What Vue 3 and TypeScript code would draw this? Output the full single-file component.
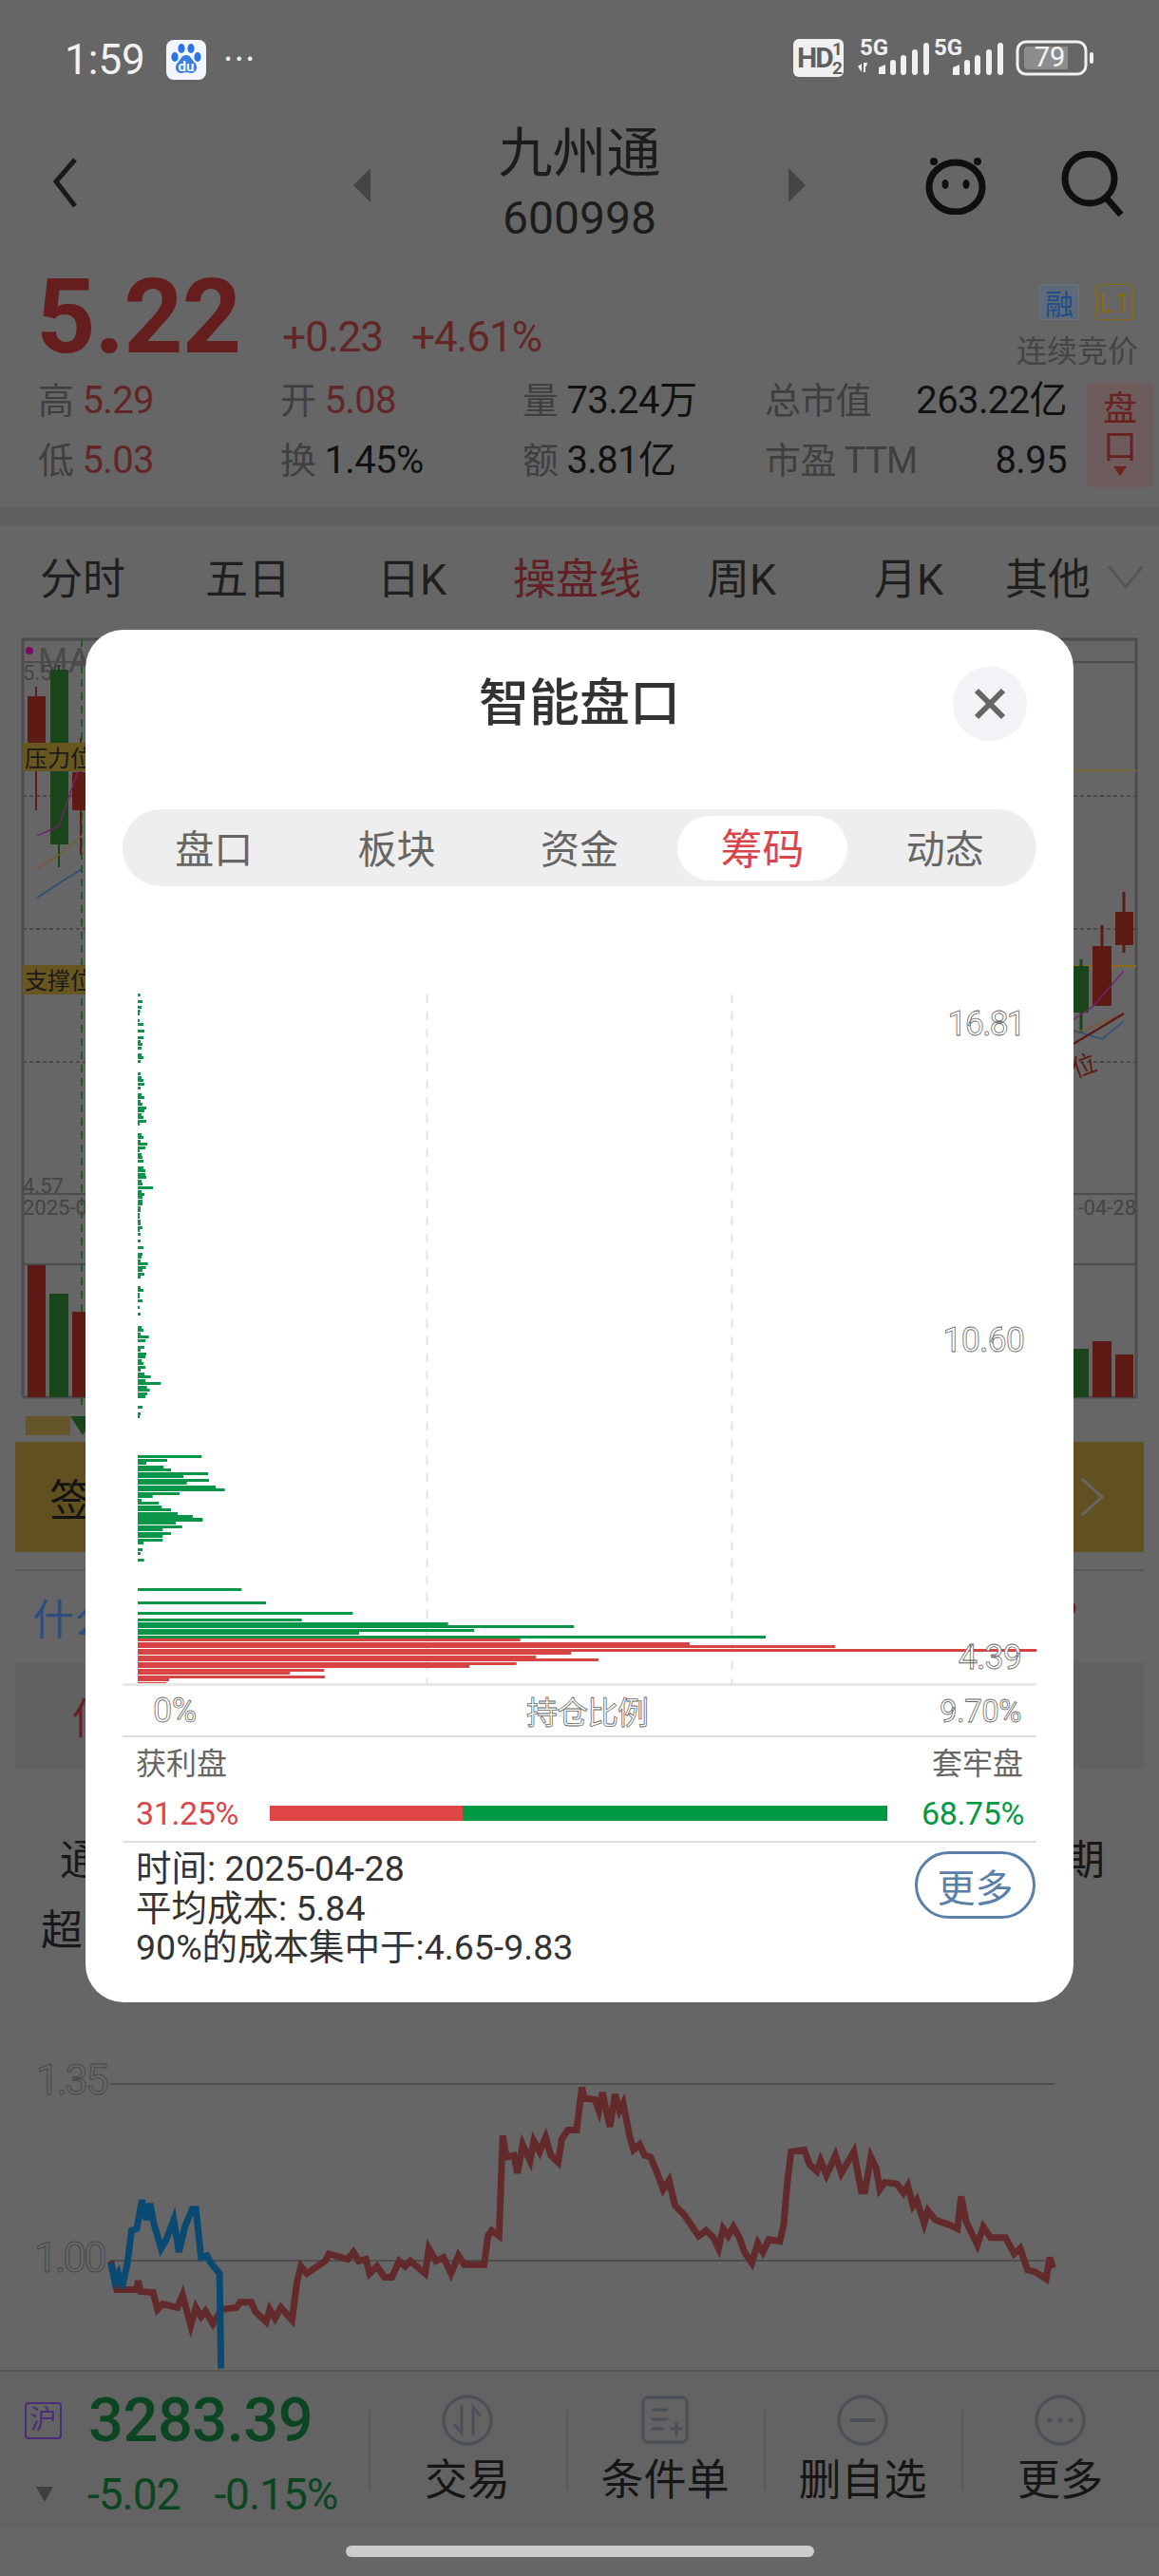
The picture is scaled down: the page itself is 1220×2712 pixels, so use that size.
<script setup lang="ts">
type P = [number, number]

const up = (list: P[]) => list.map(([y, x]) => ({ y: 1030 + y / 3, end: 100 + x / 3 }))
const mid = (list: P[]) => list.map(([y, x]) => ({ y: 1320 + y / 3, end: 100 + x / 3 }))
const low = (list: P[]) => list.map(([y, x]) => ({ y: 1590 + y / 3, end: 120 + x / 3 }))
const bot = (list: P[]) => list.map(([y, x]) => ({ y: 1640 + y / 3, end: 100 + x / 3 }))

const greenBars = [
  ...up([[52,143],[72,150],[92,147],[102,143],[113,141],[134,141],[145,153],[166,156],[187,153],[198,144],[208,150],[219,147],[240,147],[250,153],[261,144],[302,144],[313,147],[323,153],[334,156],[345,144],[366,147],[376,156],[387,144],[398,150],[408,162],[419,156],[429,147],[440,153],[450,162],[461,141],[492,147],[503,153],[513,144],[524,165],[534,159],[545,141],[555,147],[566,150],[577,153],[597,153],[608,159],[619,159],[629,162],[640,147],[650,150],[661,183],[672,147],[682,156],[692,150],[703,150],[713,150],[724,144],[734,144],[745,141],[755,141],[766,144],[776,144],[787,150],[797,141],[808,144],[829,144],[850,153]]),
  ...mid([[0,150],[10,147],[21,144],[31,167],[42,161],[52,150],[63,156],[73,144],[105,144],[115,153],[126,141],[137,141],[147,150],[168,141],[189,144],[231,147],[241,153],[252,144],[262,170],[273,159],[294,156],[305,144],[315,162],[326,159],[336,147],[347,153],[357,159],[368,144],[378,156],[389,176],[399,159],[410,208],[420,164],[431,173],[441,165],[452,159],[483,150],[504,144],[515,141],[640,337],[651,228],[661,162],[672,217],[682,240],[693,357],[703,279],[714,360],[725,290],[735,381],[746,410],[756,267],[767,182],[777,147],[788,202],[798,211],[809,240],[819,261],[830,308],[838,340]]),
  ...low([[10,200],[20,248],[30,280],[41,195],[52,215],[62,154],[72,180],[83,154],[93,154],[104,93],[125,90],[135,84],[156,95]]),
  ...bot([[101,463],[143,540],[175,814],[196,653],[207,1115],[217,1513],[228,1197],[238,834],[249,2118]]),
]
const redBars = bot([[259,1343],[270,1878],[280,2337],[291,2973],[301,1503],[312,1393],[322,1590],[333,1331],[343,1182],[354,723],[364,615],[375,726],[385,234],[396,226]])

const toTrend = (pts: P[]) =>
  pts.map(([x, y]) => `${(x / 1.285).toFixed(1)},${(2120 + y / 2.65).toFixed(1)}`).join(' ')

const redLine = toTrend([[150,690],[158,770],[185,770],[187,745],[190,775],[207,778],[213,825],[220,810],[240,820],[247,785],[258,870],[265,820],[272,845],[278,830],[288,865],[300,825],[320,820],[325,805],[340,805],[345,830],[360,860],[365,825],[372,850],[380,820],[395,855],[402,745],[407,705],[415,725],[440,690],[445,670],[470,685],[478,665],[485,690],[495,685],[500,725],[510,705],[520,735],[530,735],[540,690],[548,705],[555,690],[575,725],[580,655],[590,690],[600,680],[610,725],[620,675],[628,700],[655,700],[660,620],[665,605],[675,620],[680,340],[685,400],[695,395],[700,445],[707,365],[717,410],[722,355],[730,385],[738,345],[745,395],[755,415],[760,350],[768,325],[780,325],[787,205],[790,235],[805,240],[810,270],[815,220],[825,315],[832,225],[838,270],[843,250],[852,345],[857,380],[865,365],[872,395],[880,400],[890,450],[897,490],[905,465],[913,535],[925,560],[935,590],[945,620],[955,605],[965,625],[972,655],[978,600],[985,620],[992,595],[1000,625],[1007,665],[1017,695],[1025,640],[1032,665],[1040,630],[1055,635],[1060,590],[1065,470],[1070,385],[1088,380],[1095,420],[1105,440],[1110,410],[1118,450],[1130,395],[1138,445],[1155,385],[1165,495],[1170,495],[1178,400],[1185,430],[1190,490],[1197,470],[1213,475],[1222,500],[1228,480],[1235,535],[1240,520],[1250,585],[1255,550],[1265,575],[1285,590],[1295,600],[1300,510],[1307,580],[1322,645],[1330,595],[1340,625],[1360,625],[1372,670],[1380,655],[1390,715],[1400,720],[1415,740],[1420,680],[1424,710]])
const blueLine = toTrend([[150,695],[155,745],[160,725],[165,765],[172,700],[178,605],[185,600],[192,520],[198,575],[203,530],[208,585],[218,655],[225,630],[235,575],[242,665],[250,595],[260,545],[265,545],[272,680],[280,675],[285,695],[297,725],[299,990]])

const stats = [
  [{ k: '高', v: '5.29', red: true }, { k: '开', v: '5.08', red: true }, { k: '量', v: '73.24万', red: false }],
  [{ k: '低', v: '5.03', red: true }, { k: '换', v: '1.45%', red: false }, { k: '额', v: '3.81亿', red: false }],
]
const pageTabs = ['分时', '五日', '日K', '操盘线', '周K', '月K', '其他']
const modalTabs = ['盘口', '板块', '资金', '筹码', '动态']
const actions = ['交易', '条件单', '删自选', '更多']
</script>

<template>
  <div class="page">
    <div class="status">
      <span class="clock">1:59</span>
      <svg class="baidu" viewBox="0 0 42 42" width="42" height="42">
        <rect width="42" height="42" rx="8" fill="#f4f6ff" />
        <ellipse cx="9" cy="18" rx="3.6" ry="5" fill="#2a74e6" />
        <ellipse cx="16" cy="9" rx="3.6" ry="5" fill="#2a74e6" />
        <ellipse cx="26" cy="9" rx="3.6" ry="5" fill="#2a74e6" />
        <ellipse cx="33" cy="18" rx="3.6" ry="5" fill="#2a74e6" />
        <path d="M21 16c5 0 6 5 9 8 4 4 2 11-4 11-2 0-3-1-5-1s-3 1-5 1c-6 0-8-7-4-11 3-3 4-8 9-8z" fill="#3a7ce8" />
        <text x="21" y="33" text-anchor="middle" class="du">du</text>
      </svg>
      <span class="more-dots">···</span>
      <svg class="sys" viewBox="820 30 340 70" width="340" height="70">
        <rect x="835" y="43" width="53" height="40" rx="6" fill="#f0f0f0" />
        <text x="839" y="73" class="hd">HD</text>
        <text x="876" y="60" class="hd-sm">1</text>
        <text x="876" y="80" class="hd-sm">2</text>
        <text x="905" y="60" class="sg">5G</text>
        <text x="983" y="60" class="sg">5G</text>
        <g fill="#f0f0f0">
          <path d="M903 72l4-3v9zM909 68h4l-1 4h-1v6h-2zM925 73l7-3v10h-7z" />
          <rect x="937" y="65" width="6" height="16" rx="3" />
          <rect x="948" y="60" width="6" height="21" rx="3" />
          <rect x="960" y="54" width="6" height="27" rx="3" />
          <rect x="972" y="47" width="6" height="34" rx="3" />
          <path d="M1003 73l7-3v11h-7z" />
          <rect x="1015" y="65" width="6" height="16" rx="3" />
          <rect x="1026" y="60" width="6" height="21" rx="3" />
          <rect x="1038" y="54" width="6" height="27" rx="3" />
          <rect x="1050" y="47" width="6" height="34" rx="3" />
        </g>
        <rect x="1071" y="46" width="72" height="34" rx="9" fill="none" stroke="#f0f0f0" stroke-width="3" />
        <path d="M1082 51h42v24h-42a4 4 0 0 1-4-4v-16a4 4 0 0 1 4-4z" fill="#8d8d8d" />
        <rect x="1147" y="57" width="4" height="12" rx="2" fill="#f0f0f0" />
        <text x="1105" y="72" text-anchor="middle" class="bat">79</text>
      </svg>
    </div>

    <div class="nav">
      <svg class="back" viewBox="0 0 40 60" width="40" height="60">
        <path d="M27 3L7 26l20 26" fill="none" stroke="#1a1a1a" stroke-width="5" />
      </svg>
      <svg class="tri-l" viewBox="0 0 18 36" width="18" height="36"><path d="M18 0L0 18l18 18z" fill="#454545" /></svg>
      <div class="stock">
        <div class="stock-name">九州通</div>
        <div class="stock-code">600998</div>
      </div>
      <svg class="tri-r" viewBox="0 0 18 36" width="18" height="36"><path d="M0 0l18 18L0 36z" fill="#454545" /></svg>
      <svg class="pig" viewBox="0 0 72 66" width="72" height="66">
        <ellipse cx="36" cy="37" rx="28" ry="26" fill="none" stroke="#0f0f0f" stroke-width="7" />
        <circle cx="13" cy="10" r="4" fill="#0f0f0f" />
        <circle cx="59" cy="10" r="4" fill="#0f0f0f" />
        <ellipse cx="25" cy="34" rx="3.5" ry="5" fill="#0f0f0f" />
        <ellipse cx="47" cy="34" rx="3.5" ry="5" fill="#0f0f0f" />
      </svg>
      <svg class="search" viewBox="0 0 70 72" width="70" height="72">
        <circle cx="32" cy="29" r="26" fill="none" stroke="#0f0f0f" stroke-width="7" />
        <path d="M50 50l15 17" stroke="#0f0f0f" stroke-width="7" />
      </svg>
    </div>

    <div class="quote">
      <div class="price-row">
        <span class="price">5.22</span>
        <span class="chg">+0.23</span>
        <span class="chg">+4.61%</span>
        <div class="side">
          <div class="tags"><span class="tag tag-blue">融</span><span class="tag tag-gold">L1</span></div>
          <div class="phase">连续竞价</div>
        </div>
      </div>
      <div class="stats-wrap">
        <div class="stats">
          <div v-for="(row, i) in stats" :key="i" class="stat-row">
            <div v-for="c in row" :key="c.k" class="stat">
              <span class="k">{{ c.k }}</span>
              <span :class="c.red ? 'v-red' : 'v'">{{ c.v }}</span>
            </div>
            <div class="stat stat-last">
              <span class="k">{{ i === 0 ? '总市值' : '市盈 TTM' }}</span>
              <span class="v">{{ i === 0 ? '263.22亿' : '8.95' }}</span>
            </div>
          </div>
        </div>
        <div class="pankou">
          <span>盘</span><span>口</span>
          <svg viewBox="0 0 14 10" width="14" height="10"><path d="M0 0h14L7 10z" fill="#6f2020" /></svg>
        </div>
      </div>
    </div>
    <div class="band"></div>

    <div class="page-tabs">
      <span v-for="t in pageTabs" :key="t" class="page-tab" :class="{ 'page-tab-on': t === '操盘线' }">{{ t }}</span>
      <svg viewBox="0 0 40 26" width="40" height="26" class="chev">
        <path d="M2 2l18 22L38 2" fill="none" stroke="#555" stroke-width="3" />
      </svg>
    </div>

    <svg class="kline" viewBox="0 665 1220 815" width="1220" height="815">
      <g fill="none" stroke="#4c4c4c" stroke-width="2">
        <path d="M24 1471V673H1196V1471H24" stroke-width="3" />
        <path d="M24 697H1196M24 1257H1196M24 1331H1196" />
      </g>
      <path d="M24 838H1196M24 978H1196M24 1118H1196" stroke="#4a4a4a" stroke-width="2" stroke-dasharray="4 3" fill="none" />
      <path d="M24 811H1196" stroke="#77683a" stroke-width="2" />
      <path d="M24 1017H1196" stroke="#8a6a18" stroke-width="2" />
      <path d="M86 673V1510" stroke="#1f5a24" stroke-width="2" stroke-dasharray="8 6" fill="none" />
      <text x="40" y="708" class="k-ma">MA</text>
      <circle cx="31" cy="685" r="4" fill="#7c0a62" />
      <text x="24" y="716" class="k-sm">5.56</text>
      <text x="24" y="1256" class="k-sm">4.57</text>
      <text x="24" y="1279" class="k-sm">2025-0</text>
      <text x="1196" y="1279" text-anchor="end" class="k-sm">-04-28</text>

      <g stroke-width="2">
        <path d="M38 723V853" stroke="#5e1a14" />
        <path d="M62 700V913" stroke="#1a451a" />
        <path d="M85 777V900" stroke="#5e1a14" />
        <path d="M1138 1010V1087" stroke="#1a451a" stroke-width="3" />
        <path d="M1160 974V1059" stroke="#5e1a14" stroke-width="3" />
        <path d="M1183 939V1003" stroke="#5e1a14" stroke-width="3" />
      </g>
      <rect x="29" y="733" width="19" height="50" fill="#5e1a14" />
      <rect x="53" y="705" width="19" height="184" fill="#1a451a" />
      <rect x="76" y="813" width="20" height="40" fill="#5e1a14" />
      <rect x="1126" y="1017" width="20" height="49" fill="#1a451a" />
      <rect x="1150" y="996" width="20" height="63" fill="#5e1a14" />
      <rect x="1174" y="960" width="19" height="35" fill="#5e1a14" />

      <g fill="none" stroke-width="1.5">
        <path d="M39 880L62 870L86 800" stroke="#74246a" />
        <path d="M39 915L62 900L86 880" stroke="#7a5a30" />
        <path d="M39 945L62 930L86 915" stroke="#2b4f78" />
        <path d="M1120 1080L1150 1060L1183 1022" stroke="#74246a" />
        <path d="M1120 1092L1183 1068" stroke="#7a5a30" />
        <path d="M1120 1082L1160 1094L1183 1075" stroke="#2b4f78" />
        <path d="M1120 1105L1183 1067" stroke="#5e1a14" stroke-width="2.5" />
      </g>
      <text x="1132" y="1135" class="k-pos" transform="rotate(-20 1132 1135)">位</text>

      <rect x="24" y="782" width="70" height="30" fill="#685620" />
      <text x="26" y="807" class="k-lab">压力位</text>
      <rect x="24" y="1016" width="70" height="31" fill="#685620" />
      <text x="26" y="1041" class="k-lab">支撑位</text>

      <rect x="29" y="1332" width="19" height="139" fill="#5e1a14" />
      <rect x="52" y="1362" width="20" height="109" fill="#1a451a" />
      <rect x="76" y="1381" width="20" height="90" fill="#5e1a14" />
      <rect x="1126" y="1420" width="20" height="51" fill="#1a451a" />
      <rect x="1150" y="1412" width="20" height="59" fill="#5e1a14" />
      <rect x="1174" y="1426" width="19" height="45" fill="#5e1a14" />
    </svg>

    <div class="marks">
      <span class="mark-box"></span>
      <span class="mark-box"></span>
      <svg viewBox="0 0 26 20" width="26" height="20"><path d="M0 0h26L13 20z" fill="#1a451a" /></svg>
    </div>

    <div class="banner">
      <span class="banner-text">签</span>
      <svg viewBox="0 0 26 42" width="26" height="42"><path d="M2 2l21 19L2 40" fill="none" stroke="#666" stroke-width="3" /></svg>
    </div>

    <div class="link-row">
      <span class="link-text">什么</span>
      <span class="link-q">?</span>
    </div>

    <div class="alert"><span>信</span></div>

    <div class="para">
      <div class="para-line"><span class="first">通</span><span>期</span></div>
      <div class="para-line"><span>超</span></div>
    </div>

    <svg class="trend" viewBox="0 2140 1220 355" width="1220" height="355">
      <path d="M116 2194H1110M116 2380H1110" stroke="#4d4d4d" stroke-width="2" />
      <text x="38" y="2205" class="t-lab">1.35</text>
      <text x="36" y="2392" class="t-lab">1.00</text>
      <polyline :points="redLine" fill="none" stroke="#632a2c" stroke-width="7" stroke-linejoin="miter" />
      <polyline :points="blueLine" fill="none" stroke="#0a4a72" stroke-width="7" />
    </svg>

    <div class="bottom">
      <div class="index">
        <div class="index-top">
          <span class="hu">沪</span>
          <span class="index-val">3283.39</span>
        </div>
        <div class="index-bot">
          <svg viewBox="0 0 18 16" width="18" height="16"><path d="M0 0h18L9 16z" fill="#3f3f3f" /></svg>
          <span>-5.02</span>
          <span>-0.15%</span>
        </div>
      </div>
      <div v-for="(a, i) in actions" :key="a" class="action">
        <svg viewBox="0 0 56 56" width="56" height="56">
          <template v-if="i === 0">
            <circle cx="28" cy="28" r="25" fill="none" stroke="#4b5058" stroke-width="3" />
            <path d="M22 12V42L14 32M34 44V14L42 24" fill="none" stroke="#4b5058" stroke-width="3" />
          </template>
          <template v-else-if="i === 1">
            <rect x="5" y="4" width="46" height="47" rx="5" fill="none" stroke="#4b5058" stroke-width="3" />
            <path d="M14 17H31M14 27H31M14 37H27M33 37H47M40 30V45" fill="none" stroke="#4b5058" stroke-width="3" />
          </template>
          <template v-else-if="i === 2">
            <circle cx="28" cy="28" r="25" fill="none" stroke="#4b5058" stroke-width="3" />
            <path d="M15 28H41" stroke="#4b5058" stroke-width="4" />
          </template>
          <template v-else>
            <circle cx="28" cy="28" r="25" fill="none" stroke="#4b5058" stroke-width="3" />
            <circle cx="17" cy="28" r="2.6" fill="#4b5058" />
            <circle cx="28" cy="28" r="2.6" fill="#4b5058" />
            <circle cx="39" cy="28" r="2.6" fill="#4b5058" />
          </template>
        </svg>
        <span class="action-label">{{ a }}</span>
      </div>
    </div>
    <div class="home"><span class="home-bar"></span></div>

    <div class="modal">
      <div class="m-head">
        <span></span>
        <span class="m-title">智能盘口</span>
        <button class="m-close" type="button">
          <svg viewBox="0 0 36 36" width="36" height="36"><path d="M4 4l28 28M32 4L4 32" stroke="#666" stroke-width="6" /></svg>
        </button>
      </div>
      <div class="m-tabs">
        <span v-for="t in modalTabs" :key="t" class="m-tab" :class="{ 'm-tab-on': t === '筹码' }">{{ t }}</span>
      </div>
      <svg class="chips" viewBox="129 1040 962 732" width="962" height="732">
        <path d="M449.5 1047V1772M770.5 1047V1772" stroke="#e3e3e3" stroke-width="2" stroke-dasharray="9 9" fill="none" />
        <rect v-for="b in greenBars" :key="'g' + b.y" x="145" :y="Math.round(b.y - 1.5)" :width="b.end - 145" height="3" fill="#0a9549" />
        <rect v-for="b in redBars" :key="'r' + b.y" x="145" :y="Math.round(b.y - 1.5)" :width="b.end - 145" height="3" fill="#d84444" />
        <text x="1078" y="1090" text-anchor="end" class="c-lab">16.81</text>
        <text x="1078" y="1423" text-anchor="end" class="c-lab c-lab-wide">10.60</text>
        <text x="1075" y="1757" text-anchor="end" class="c-lab c-lab-wide">4.39</text>
      </svg>
      <div class="axis">
        <span class="axis-start">0%</span>
        <span class="axis-mid">持仓比例</span>
        <span class="axis-end">9.70%</span>
      </div>
      <div class="labels"><span>获利盘</span><span>套牢盘</span></div>
      <div class="ratio">
        <span class="r-red">31.25%</span>
        <div class="r-bar"><i class="r-fill" :style="{ width: '31.25%' }"></i></div>
        <span class="r-green">68.75%</span>
      </div>
      <div class="info">
        <div class="info-text">
          <div>时间: 2025-04-28</div>
          <div>平均成本: 5.84</div>
          <div>90%的成本集中于:4.65-9.83</div>
        </div>
        <button class="more-btn" type="button">更多</button>
      </div>
    </div>
  </div>
</template>

<style scoped>
.page {
  position: relative;
  width: 1220px;
  height: 2712px;
  overflow: hidden;
  background: #666;
  color: #1a1a1a;
  font-family: Roboto, "Noto Sans CJK SC", sans-serif;
}
.status {
  height: 126px;
  display: flex;
  align-items: center;
  box-sizing: border-box;
  padding-left: 68px;
}
.clock { font-size: 44px; color: #f2f2f2; width: 107px; }
.baidu { flex: none; }
.du { font: 700 15px Roboto, sans-serif; fill: #f4f6ff; }
.more-dots { font-size: 40px; line-height: 36px; color: #eee; margin-left: 18px; letter-spacing: 1px; }
.sys { margin-left: auto; margin-right: 60px; flex: none; }
.hd { font: 700 30px Roboto, sans-serif; fill: #5f5f5f; letter-spacing: -2px; }
.hd-sm { font: 700 19px Roboto, sans-serif; fill: #5f5f5f; }
.sg { font: 700 24px Roboto, sans-serif; fill: #f0f0f0; }
.bat { font: 400 29px Roboto, sans-serif; fill: #f4f4f4; }

.nav { height: 138px; display: flex; align-items: center; }
.back { margin-left: 52px; flex: none; }
.tri-l { margin-left: 280px; flex: none; }
.stock { width: 440px; flex: none; text-align: center; padding-top: 2px; }
.stock-name { font-size: 57px; line-height: 68px; color: #1c1c1c; }
.stock-code { font-size: 48px; line-height: 68px; color: #1c1c1c; }
.tri-r { flex: none; }
.pig { margin-left: 122px; margin-bottom: 4px; flex: none; }
.search { margin-left: 73px; flex: none; }

.quote { height: 269px; box-sizing: border-box; }
.price-row { height: 126px; display: flex; align-items: flex-end; padding: 0 22px 0 38px; position: relative; }
.price { font-size: 109px; font-weight: 700; line-height: 112px; color: #661d1d; margin-right: 44px; letter-spacing: -1px; height: 112px; }
.chg { font-size: 44px; line-height: 50px; color: #632626; margin-right: 30px; margin-bottom: 10px; letter-spacing: -1px; }
.side { margin-left: auto; display: flex; flex-direction: column; align-items: flex-end; gap: 16px; margin-bottom: 3px; }
.tags { display: flex; gap: 18px; padding-right: 5px; }
.tag { width: 42px; height: 38px; display: flex; align-items: center; justify-content: center; font-size: 30px; border-radius: 3px; box-sizing: border-box; }
.tag-blue { background: #5f6a78; color: #1e4d8a; border: 1px solid #6a7380; }
.tag-gold { color: #8a6b10; border: 1px solid #8a6b10; width: 39px; }
.phase { font-size: 32px; line-height: 34px; color: #444; }

.stats-wrap { display: flex; padding-left: 40px; }
.stats { width: 1083px; }
.stat-row { height: 63px; display: grid; grid-template-columns: 255px 255px 255px 318px; align-items: center; }
.stat { display: flex; gap: 9px; align-items: center; font-size: 40px; line-height: 48px; letter-spacing: -.6px; }
.stat-last { justify-content: space-between; }
.k { color: #3f3f3f; font-size: 38px; }
.v { color: #111; }
.v-red { color: #632626; }
.pankou {
  margin: 13px 0 0 21px;
  width: 70px;
  height: 110px;
  background: #6e5c5c;
  border-radius: 4px;
  display: flex;
  flex-direction: column;
  align-items: center;
  font-size: 36px;
  line-height: 40px;
  color: #6a2020;
  padding-top: 8px;
  box-sizing: border-box;
}
.band { height: 20px; background: #606060; }
.page-tabs { height: 112px; position: relative; display: flex; align-items: center; padding: 0 0 5px 42px; box-sizing: border-box; }
.page-tab { font-size: 45px; color: #1f1f1f; flex: none; }
.page-tab:nth-child(1) { width: 174px; }
.page-tab:nth-child(2) { width: 181px; }
.page-tab:nth-child(3) { width: 143px; }
.page-tab:nth-child(4) { width: 204px; color: #632024; }
.page-tab:nth-child(5) { width: 176px; }
.page-tab:nth-child(6) { width: 138px; }
.page-tab:nth-child(7) { width: 107px; }
.chev { flex: none; }

.kline, .trend { display: block; }
.k-ma { font: 400 36px Roboto, sans-serif; fill: #4a4a4a; }
.k-sm { font: 400 22px Roboto, sans-serif; fill: #444; }
.k-lab { font: 400 24px "Noto Sans CJK SC", sans-serif; fill: #1a1a1a; }
.k-pos { font: 400 26px "Noto Sans CJK SC", sans-serif; fill: #5e1a14; }

.marks { height: 38px; box-sizing: border-box; padding: 11px 0 0 27px; display: flex; align-items: flex-start; }
.mark-box { width: 23.5px; height: 20px; background: #65562a; }
.banner { height: 116px; margin: 0 16px; background: #615120; display: flex; align-items: center; justify-content: space-between; padding: 0 41px 0 36px; box-sizing: border-box; }
.banner-text { font-size: 46px; color: #141414; }
.link-row { height: 116px; margin: 0 16px; display: flex; align-items: center; justify-content: space-between; padding: 20px 70px 0 18px; box-sizing: border-box; background: linear-gradient(#585858, #585858) 0 18px / 100% 2px no-repeat; }
.link-text { font-size: 44px; color: #2b507f; }
.link-q { font-size: 44px; color: #6e1a1a; }
.alert { height: 112px; margin: 0 16px; background: #616161; display: flex; align-items: center; padding-left: 60px; box-sizing: border-box; font-size: 44px; color: #6a1f1f; }
.para { height: 278px; box-sizing: border-box; padding: 61px 57px 0 43px; font-size: 44px; color: #181818; }
.para-line { height: 74px; display: flex; justify-content: space-between; }
.first { margin-left: 20px; }
.t-lab { font: 400 44px Roboto, sans-serif; fill: #666; stroke: #494949; stroke-width: 1; letter-spacing: -3px; }

.bottom { height: 165px; box-sizing: border-box; border-top: 2px solid #545454; background: #636363; display: flex; }
.index { width: 388px; padding: 24px 0 0 26px; box-sizing: border-box; flex: none; }
.index-top { display: flex; align-items: center; gap: 28px; }
.hu { width: 39px; height: 39px; border: 2px solid #4a2d78; box-sizing: border-box; border-radius: 4px; color: #4a2d78; font-size: 28px; line-height: 33px; text-align: center; }
.index-val { font-size: 65px; font-weight: 500; line-height: 54px; color: #0c4522; letter-spacing: -.5px; }
.index-bot { display: flex; align-items: center; font-size: 46px; line-height: 50px; color: #0c4522; margin-top: 26px; padding-left: 12px; letter-spacing: -1px; }
.index-bot svg { margin-right: 36px; }
.index-bot span:last-child { margin-left: 36px; }
.action { flex: 1; display: flex; flex-direction: column; align-items: center; position: relative; padding-top: 23px; }
.action::before { content: ""; position: absolute; left: 0; top: 40px; height: 85px; width: 2px; background: #585858; }
.action-label { font-size: 45px; line-height: 50px; margin-top: 11px; color: #161616; }
.home { height: 52px; display: flex; justify-content: center; padding-top: 20px; box-sizing: border-box; }
.home-bar { width: 493px; height: 12px; border-radius: 6px; background: #ccc; }

.modal {
  position: absolute;
  left: 90px;
  top: 663px;
  width: 1040px;
  height: 1445px;
  background: #fff;
  border-radius: 40px;
  padding: 0 39px;
  box-sizing: border-box;
}
.m-head { display: grid; grid-template-columns: 1fr auto 1fr; align-items: center; padding: 39px 0 72px; }
.m-title { font-size: 53px; font-weight: 500; line-height: 78px; color: #333; }
.m-close { justify-self: end; margin-right: 10px; width: 78px; height: 78px; border-radius: 50%; border: 0; background: #f2f2f7; display: flex; align-items: center; justify-content: center; padding: 0; }
.m-tabs { height: 81px; border-radius: 41px; background: #eee; display: grid; grid-template-columns: repeat(5, 1fr); padding: 7px 0; box-sizing: border-box; }
.m-tab { display: flex; align-items: center; justify-content: center; font-size: 41px; color: #666; margin: 0 7px; border-radius: 34px; padding-bottom: 4px; box-sizing: border-box; }
.m-tab-on { background: #fff; color: #d8464c; font-size: 44px; }
.chips { display: block; margin-top: 107px; border-bottom: 3px solid #e8e8e8; box-sizing: content-box; }
.c-lab { font: 400 36px Roboto, sans-serif; fill: #fff; stroke: #666; stroke-width: .8; letter-spacing: -2px; }
.c-lab-wide { letter-spacing: -1px; }
.axis { height: 52px; display: grid; grid-template-columns: 1fr auto 1fr; align-items: center; padding: 0 16px 0 32px; border-bottom: 2px solid #ddd; font-size: 33px; color: #fff; -webkit-text-stroke: .8px #666; letter-spacing: -.5px; }
.axis-start { font-size: 36px; }
.axis-mid { letter-spacing: -1px; }
.axis-end { text-align: right; }
.labels { display: flex; justify-content: space-between; padding: 7px 14px 0; font-size: 32px; line-height: 42px; color: #666; }
.ratio { display: flex; align-items: center; padding: 2px 13px 0 14px; height: 58px; border-bottom: 2px solid #ddd; box-sizing: content-box; font-size: 34px; letter-spacing: -.4px; justify-content: space-between; }
.r-red { color: #d8464c; width: 107px; }
.r-green { color: #009944; width: 111px; text-align: right; }
.r-bar { width: 650px; height: 16px; background: #009944; }
.r-fill { display: block; height: 100%; background: #e04545; }
.info { display: flex; justify-content: space-between; padding: 5px 1px 0 14px; }
.info-text { font-size: 37.5px; line-height: 41.5px; color: #333; padding-top: 2px; }
.more-btn { width: 127px; height: 71px; border: 3px solid #5a80aa; border-radius: 36px; background: #fff; color: #5a80aa; font: 400 40px "Noto Sans CJK SC", sans-serif; padding: 0; margin-top: 4px; box-sizing: border-box; }
</style>
